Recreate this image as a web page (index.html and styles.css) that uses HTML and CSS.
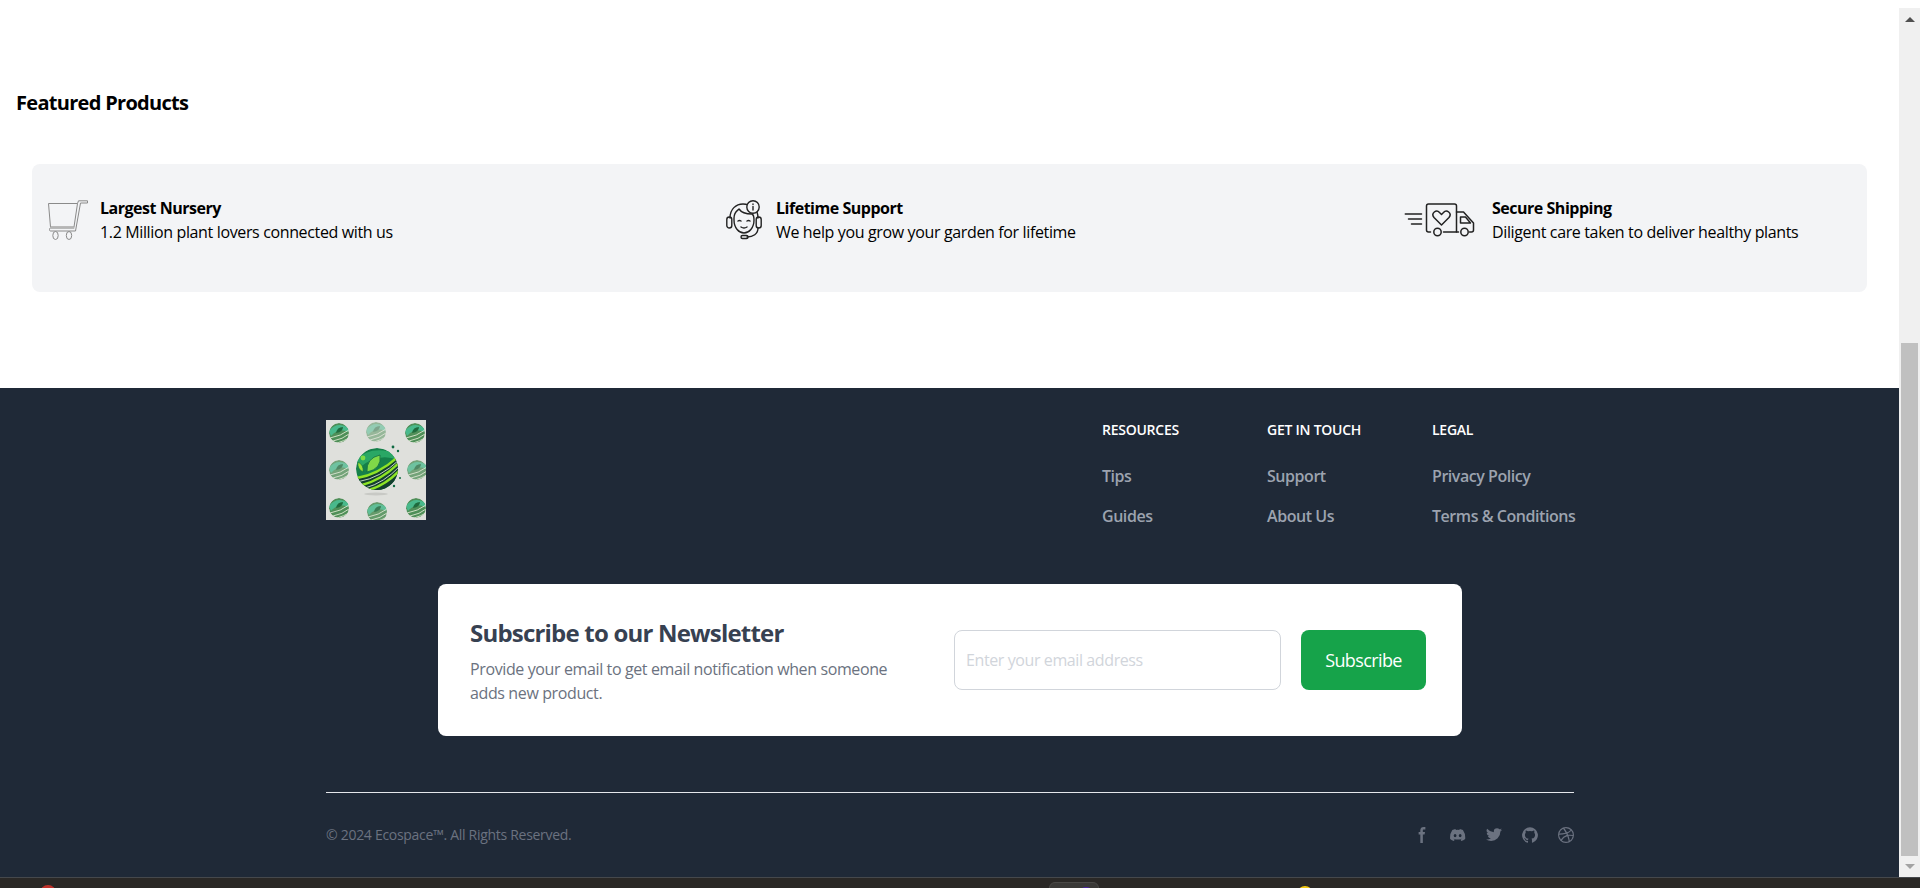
FILE: index.html
```html
<!DOCTYPE html>
<html lang="en">
<head>
    <meta charset="UTF-8">
    <meta name="viewport" content="width=device-width, initial-scale=1.0">
    <title>Ecospace</title>
    <link rel="stylesheet" href="styles.css">
</head>
<body>
    <div class="window">
        <main class="page">
            <section class="featured">
                <h2 class="featured-title">Featured Products</h2>
                <div class="perks">
                    <div class="perk">
                        <svg class="perk-icon" width="40" height="40" viewBox="0 0 40 40" fill="none" stroke="#8a8a8a" stroke-width="1">
                            <path d="M0.5 3.5H29.5L26 27H2.5Z"/>
                            <path d="M29.5 3.5L30.5 0.8H39.5V3H32.5L27.5 31H2.5Q1.5 31 1.5 29.5Q1.5 28 2.5 28H26"/>
                            <path d="M2.5 27.5H26.5" stroke="#b5b5b5" stroke-width="2"/>
                            <ellipse cx="7.5" cy="35.5" rx="2.7" ry="4"/>
                            <ellipse cx="21" cy="35.5" rx="2.7" ry="4"/>
                        </svg>
                        <div class="perk-text">
                            <h3>Largest Nursery</h3>
                            <p>1.2 Million plant lovers connected with us</p>
                        </div>
                    </div>
                    <div class="perk">
                        <svg class="perk-icon perk-icon-agent" width="36" height="40" viewBox="0 0 36 40" fill="none" stroke="#222" stroke-width="1.4" stroke-linecap="round" stroke-linejoin="round">
                            <path d="M4 18C4 9 10 4 17 4Q20 4 22 5"/>
                            <path d="M31 12Q32 15 32 18"/>
                            <path d="M8 18C8 12 11 11 13 9C15 12 20 14 26 14Q28 15 28 20C28 28 23 33 18 33C13 33 8 28 8 20Z"/>
                            <rect x="0.8" y="17" width="5" height="11" rx="2.5"/>
                            <rect x="30.2" y="17" width="5" height="11" rx="2.5"/>
                            <path d="M32 28C32 34 27 37 21 37"/>
                            <rect x="15" y="35.5" width="7" height="3" rx="1.5"/>
                            <path d="M12 21Q13.5 20 15 21M21 21Q22.5 20 24 21M15 27Q18 29 21 27"/>
                            <circle cx="27" cy="7" r="6.2" fill="#f3f4f6"/>
                            <path d="M27 6.5V10M27 4V4.4"/>
                        </svg>
                        <div class="perk-text">
                            <h3>Lifetime Support</h3>
                            <p>We help you grow your garden for lifetime</p>
                        </div>
                    </div>
                    <div class="perk">
                        <svg class="perk-icon perk-icon-truck" width="71" height="34" viewBox="0 0 70 34" fill="none" stroke="#222" stroke-width="1.5" stroke-linecap="round" stroke-linejoin="round">
                            <path d="M0.8 11H17M4 16H17M7 21H17"/>
                            <path d="M26 29H24Q22 29 22 27V3Q22 1 24 1H50Q52 1 52 3V29H39"/>
                            <path d="M52 9H59L69 20V27Q69 29 67 29H65M52 29H54"/>
                            <path d="M56 14H61L66 20H56Z"/>
                            <circle cx="33" cy="29" r="3.7"/>
                            <circle cx="60" cy="29" r="3.7"/>
                            <path d="M37 22L29.5 14.5C26 10 32 6 35 9.5L37 11.5L39 9.5C42 6 48 10 44.5 14.5Z"/>
                        </svg>
                        <div class="perk-text">
                            <h3>Secure Shipping</h3>
                            <p>Diligent care taken to deliver healthy plants</p>
                        </div>
                    </div>
                </div>
            </section>

            <footer class="footer">
                <div class="footer-inner">
                    <div class="footer-top">
                        <svg class="logo" width="100" height="100" viewBox="0 0 100 100">
                            <defs>
                                <clipPath id="small-clip"><circle cx="0" cy="0" r="10"/></clipPath>
                                <clipPath id="big-clip"><circle cx="51" cy="49" r="21"/></clipPath>
                                <g id="globe" clip-path="url(#small-clip)">
                                    <circle cx="0" cy="0" r="10" fill="#4f8f58"/>
                                    <path d="M-10 -2Q-2 -12 10 -5L9 -1Q0 -6 -8 3Z" fill="#49b98c"/>
                                    <path d="M-3 0Q-2 -6 4 -6Q4 -1 -3 0Z" fill="#1f6b3e"/>
                                    <path d="M-9 5Q2 3 10 -3M-6 8Q4 6 10 1M-2 10Q5 8 10 5" fill="none" stroke="#dce8d0" stroke-width="0.9"/>
                                </g>
                            </defs>
                            <rect width="100" height="100" fill="#dfe0dc"/>
                            <use href="#globe" x="13" y="13"/>
                            <use href="#globe" x="89" y="13"/>
                            <use href="#globe" x="13" y="50" opacity="0.75"/>
                            <use href="#globe" x="91" y="50" opacity="0.75"/>
                            <use href="#globe" x="13" y="88"/>
                            <use href="#globe" x="51" y="92" opacity="0.85"/>
                            <use href="#globe" x="90" y="88"/>
                            <use href="#globe" x="50" y="12" opacity="0.5"/>
                            <ellipse cx="50" cy="74" rx="12" ry="1.4" fill="#c8c9c5"/>
                            <g clip-path="url(#big-clip)">
                                <circle cx="51" cy="49" r="21" fill="#15804a"/>
                                <path d="M30 40Q45 24 72 34V40Q52 32 33 48Z" fill="#2aa765"/>
                                <path d="M28 58Q50 56 74 34V74H28Z" fill="#123f2e"/>
                                <path d="M31 58Q52 55 73 36M36 65Q56 60 74 42M43 70Q60 65 74 50" fill="none" stroke="#8de326" stroke-width="2.4"/>
                                <path d="M33 61.5Q54 58 73 40M39 68Q58 63 74 46" fill="none" stroke="#f0f5ea" stroke-width="0.8"/>
                            </g>
                            <path d="M41 52Q40 38 54 35Q56 49 41 52Z" fill="#7fd848" stroke="#0f6a42" stroke-width="0.8"/>
                            <path d="M32 42Q38 45 37 52Q31 49 32 42Z" fill="#9be238" stroke="#0f6a42" stroke-width="0.6"/>
                            <circle cx="37" cy="38" r="2.4" fill="#7fdc45"/>
                            <circle cx="67" cy="27" r="1.4" fill="#0f6a42"/>
                            <circle cx="72" cy="31" r="1.2" fill="#0f6a42"/>
                            <circle cx="74" cy="58" r="1" fill="#0f6a42"/>
                            <circle cx="68" cy="66" r="1.2" fill="#0f6a42"/>
                        </svg>
                        <div class="footer-links">
                            <div class="link-col">
                                <h4>Resources</h4>
                                <a href="#">Tips</a>
                                <a href="#">Guides</a>
                            </div>
                            <div class="link-col">
                                <h4>Get in touch</h4>
                                <a href="#">Support</a>
                                <a href="#">About Us</a>
                            </div>
                            <div class="link-col">
                                <h4>Legal</h4>
                                <a href="#">Privacy Policy</a>
                                <a href="#">Terms &amp; Conditions</a>
                            </div>
                        </div>
                    </div>

                    <div class="newsletter">
                        <div class="newsletter-text">
                            <h3>Subscribe to our Newsletter</h3>
                            <p>Provide your email to get email notification when someone adds new product.</p>
                        </div>
                        <form class="newsletter-form">
                            <input type="email" placeholder="Enter your email address">
                            <button type="button">Subscribe</button>
                        </form>
                    </div>

                    <hr class="footer-line">

                    <div class="footer-bottom">
                        <span class="copyright">© 2024 Ecospace™. All Rights Reserved.</span>
                        <div class="socials">
                            <svg width="16" height="16" viewBox="0 0 8 19"><path d="M6.135 3H8V0H6.135a4.147 4.147 0 0 0-4.142 4.142V6H0v3h2v9.938h3V9h2.021l.592-3H5V3.591A.6.6 0 0 1 5.592 3h.543Z"/></svg>
                            <svg width="16" height="16" viewBox="0 0 21 16"><path d="M16.942 1.556a16.3 16.3 0 0 0-4.126-1.3 12.04 12.04 0 0 0-.529 1.1 15.175 15.175 0 0 0-4.573 0 11.585 11.585 0 0 0-.535-1.1 16.274 16.274 0 0 0-4.129 1.3A17.392 17.392 0 0 0 .182 13.218a15.785 15.785 0 0 0 4.963 2.521c.41-.564.773-1.16 1.084-1.785a10.63 10.63 0 0 1-1.706-.83c.143-.106.283-.217.418-.33a11.664 11.664 0 0 0 10.118 0c.137.113.277.224.418.33-.544.328-1.116.606-1.71.832a12.52 12.52 0 0 0 1.084 1.785 16.46 16.46 0 0 0 5.064-2.595 17.286 17.286 0 0 0-2.973-11.59ZM6.678 10.813a1.941 1.941 0 0 1-1.8-2.045 1.93 1.93 0 0 1 1.8-2.047 1.919 1.919 0 0 1 1.8 2.047 1.93 1.93 0 0 1-1.8 2.045Zm6.644 0a1.94 1.94 0 0 1-1.8-2.045 1.93 1.93 0 0 1 1.8-2.047 1.918 1.918 0 0 1 1.8 2.047 1.93 1.93 0 0 1-1.8 2.045Z"/></svg>
                            <svg width="16" height="16" viewBox="0 0 20 17"><path d="M20 1.892a8.178 8.178 0 0 1-2.355.635 4.074 4.074 0 0 0 1.8-2.235 8.344 8.344 0 0 1-2.605.98A4.13 4.13 0 0 0 13.85 0a4.068 4.068 0 0 0-4.1 4.038 4 4 0 0 0 .105.919A11.705 11.705 0 0 1 1.4.734a4.006 4.006 0 0 0 1.268 5.392 4.165 4.165 0 0 1-1.859-.5v.05A4.057 4.057 0 0 0 4.1 9.635a4.19 4.19 0 0 1-1.856.07 4.108 4.108 0 0 0 3.831 2.807A8.36 8.36 0 0 1 0 14.184 11.732 11.732 0 0 0 6.291 16 11.502 11.502 0 0 0 17.964 4.5c0-.177 0-.35-.012-.523A8.143 8.143 0 0 0 20 1.892Z"/></svg>
                            <svg width="16" height="16" viewBox="0 0 20 20"><path d="M10 .333A9.911 9.911 0 0 0 6.866 19.65c.5.092.678-.215.678-.477 0-.237-.01-1.017-.014-1.845-2.757.6-3.338-1.169-3.338-1.169a2.627 2.627 0 0 0-1.1-1.451c-.9-.615.07-.6.07-.6a2.084 2.084 0 0 1 1.518 1.021 2.11 2.11 0 0 0 2.884.823c.044-.503.268-.973.63-1.325-2.2-.25-4.516-1.1-4.516-4.9A3.832 3.832 0 0 1 4.7 7.068a3.56 3.56 0 0 1 .095-2.623s.832-.266 2.726 1.016a9.409 9.409 0 0 1 4.962 0c1.89-1.282 2.717-1.016 2.717-1.016.366.83.402 1.768.1 2.623a3.827 3.827 0 0 1 1.02 2.659c0 3.807-2.319 4.644-4.525 4.889a2.366 2.366 0 0 1 .673 1.834c0 1.326-.012 2.394-.012 2.72 0 .263.18.572.681.475A9.911 9.911 0 0 0 10 .333Z"/></svg>
                            <svg width="16" height="16" viewBox="0 0 20 20"><path d="M10 0a10 10 0 1 0 10 10A10.009 10.009 0 0 0 10 0Zm6.613 4.614a8.523 8.523 0 0 1 1.93 5.32 20.094 20.094 0 0 0-5.949-.274c-.059-.149-.122-.292-.184-.441a23.879 23.879 0 0 0-.566-1.239 11.41 11.41 0 0 0 4.769-3.366ZM8 1.707a8.821 8.821 0 0 1 2-.238 8.5 8.5 0 0 1 5.664 2.152 9.608 9.608 0 0 1-4.476 3.087A45.758 45.758 0 0 0 8 1.707ZM1.642 8.262a8.57 8.57 0 0 1 4.73-5.981A53.998 53.998 0 0 1 9.54 7.222a32.078 32.078 0 0 1-7.9 1.04h.002Zm2.01 7.46a8.51 8.51 0 0 1-2.2-5.707v-.262a31.64 31.64 0 0 0 8.777-1.219c.243.477.477.964.692 1.449-.114.032-.227.067-.336.1a13.569 13.569 0 0 0-6.942 5.636l.009.003ZM10 18.556a8.508 8.508 0 0 1-5.243-1.8 11.717 11.717 0 0 1 6.7-5.332.509.509 0 0 1 .055-.02 35.65 35.65 0 0 1 1.819 6.476 8.476 8.476 0 0 1-3.331.676Zm4.772-1.462A37.232 37.232 0 0 0 13.113 11a12.513 12.513 0 0 1 5.321.364 8.56 8.56 0 0 1-3.66 5.73h-.002Z"/></svg>
                        </div>
                    </div>
                </div>
            </footer>
        </main>

        <div class="scrollbar">
            <div class="scroll-btn scroll-btn-top"><span class="arrow-up"></span></div>
            <div class="scroll-track"><div class="scroll-thumb"></div></div>
            <div class="scroll-btn"><span class="arrow-down"></span></div>
        </div>
    </div>

    <div class="taskbar">
        <span class="task-dot task-red"></span>
        <span class="task-btn"><span class="task-dot task-purple"></span></span>
        <span class="task-dot task-yellow"></span>
    </div>
</body>
</html>
```

FILE: styles.css
```css
* {
    box-sizing: border-box;
}

html, body {
    height: 100%;
}

body {
    margin: 0;
    display: flex;
    flex-direction: column;
    overflow: hidden;
    font-family: "Open Sans", "Liberation Sans", sans-serif;
    letter-spacing: -0.36px;
    color: #000;
}

h2, h3, h4, p {
    margin: 0;
}

.window {
    flex: 0 0 877px;
    display: flex;
    overflow: hidden;
    background: #fff;
}

.page {
    flex: 1;
    min-width: 0;
}

/* featured */
.featured {
    height: 388px;
    padding-top: 89px;
}

.featured-title {
    margin-left: 16px;
    font-size: 20px;
    line-height: 28px;
    font-weight: 700;
    letter-spacing: -0.7px;
}

.perks {
    margin: 47px 32px 0;
    height: 128px;
    padding: 32px 16px 0;
    display: grid;
    grid-template-columns: 678px 678px 1fr;
    background: #f3f4f6;
    border-radius: 8px;
}

.perk {
    display: flex;
    align-items: flex-start;
    gap: 12px;
}

.perk-icon {
    flex: none;
    margin-top: 4px;
}

.perk-icon-agent {
    margin-right: 2px;
}

.perk-icon-truck {
    margin-top: 7px;
    margin-right: 5px;
}

.perk-text h3 {
    font-size: 16px;
    line-height: 24px;
    font-weight: 700;
    letter-spacing: -0.48px;
}

.perk-text p {
    font-size: 16px;
    line-height: 24px;
}

/* footer */
.footer {
    height: 489px;
    padding-top: 32px;
    background: #1f2937;
}

.footer-inner {
    width: 1248px;
    margin-left: 326px;
}

.footer-top {
    display: flex;
    justify-content: space-between;
    height: 108px;
}

.footer-links {
    display: grid;
    grid-template-columns: 133px 133px 142px;
    column-gap: 32px;
}

.link-col {
    display: flex;
    flex-direction: column;
    gap: 16px;
}

.link-col h4 {
    margin-bottom: 8px;
    font-size: 14px;
    line-height: 20px;
    font-weight: 600;
    letter-spacing: -0.25px;
    color: #fff;
    text-transform: uppercase;
}

.link-col a {
    font-size: 16px;
    line-height: 24px;
    font-weight: 600;
    letter-spacing: -0.45px;
    color: #9ca3af;
    text-decoration: none;
    white-space: nowrap;
}

.newsletter {
    margin: 56px 0 0 112px;
    width: 1024px;
    height: 152px;
    padding: 0 36px 0 32px;
    display: flex;
    align-items: center;
    justify-content: space-between;
    background: #fff;
    border-radius: 8px;
}

.newsletter-text {
    width: 440px;
}

.newsletter-text h3 {
    margin-bottom: 7px;
    font-size: 24px;
    line-height: 34px;
    font-weight: 700;
    letter-spacing: -0.8px;
    color: #374151;
}

.newsletter-text p {
    font-size: 16px;
    line-height: 24px;
    letter-spacing: -0.38px;
    color: #6b7280;
}

.newsletter-form {
    display: flex;
    gap: 20px;
}

.newsletter-form input {
    width: 327px;
    height: 60px;
    padding: 0 11px;
    border: 1px solid #d1d5db;
    border-radius: 8px;
    font: inherit;
    font-size: 16px;
    letter-spacing: -0.4px;
    outline: none;
}

.newsletter-form input::placeholder {
    color: #d1d5db;
}

.newsletter-form button {
    width: 125px;
    height: 60px;
    border: 0;
    border-radius: 8px;
    background: #16a34a;
    color: #fff;
    font: inherit;
    font-size: 18px;
    letter-spacing: -0.6px;
}

.footer-line {
    margin: 56px 0 0;
    border: 0;
    border-top: 1px solid #e5e7eb;
}

.footer-bottom {
    margin-top: 32px;
    display: flex;
    align-items: center;
    justify-content: space-between;
    height: 20px;
}

.copyright {
    font-size: 14px;
    line-height: 20px;
    letter-spacing: -0.29px;
    color: #6b7280;
}

.socials {
    display: flex;
    gap: 20px;
}

.socials svg {
    display: block;
    fill: #6b7280;
}

/* window chrome, caught in the screenshot */
.scrollbar {
    flex: 0 0 21px;
    margin-top: 8px;
    display: flex;
    flex-direction: column;
    background: #f0f0f0;
}

.scroll-btn {
    flex: 0 0 21px;
    display: flex;
    align-items: center;
    justify-content: center;
}

.scroll-btn-top {
    flex-basis: 22px;
}

.scroll-track {
    flex: 1;
    padding: 313px 2px 0;
}

.scroll-thumb {
    height: 100%;
    background: #c0c0c0;
}

.arrow-up, .arrow-down {
    width: 0;
    height: 0;
    border-left: 5px solid transparent;
    border-right: 5px solid transparent;
}

.arrow-up {
    border-bottom: 5px solid #505050;
}

.arrow-down {
    border-top: 5px solid #a3a3a3;
}

.taskbar {
    flex: 0 0 11px;
    display: flex;
    align-items: flex-start;
    overflow: hidden;
    padding-left: 40px;
    background: #2a2826;
    border-top: 1px solid #45484c;
}

.task-dot {
    flex: none;
    width: 16px;
    height: 16px;
    border-radius: 50%;
}

.task-red {
    margin-top: 7px;
    background: #c0322b;
}

.task-btn {
    flex: none;
    width: 50px;
    height: 20px;
    margin: 4px 0 0 993px;
    padding: 4px 0 0 28px;
    background: #3a3937;
    border: 1px solid #4a4947;
    border-radius: 6px;
}

.task-purple {
    display: block;
    background: #4a22a8;
}

.task-yellow {
    margin: 8px 0 0 198px;
    background: #f2c811;
}
```
